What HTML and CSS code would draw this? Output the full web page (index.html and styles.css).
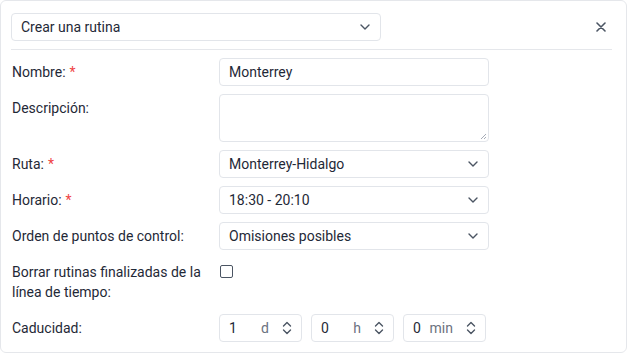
FILE: index.html
```html
<!DOCTYPE html>
<html lang="es">
<head>
    <meta charset="UTF-8">
    <title>Crear una rutina</title>
    <link rel="stylesheet" href="styles.css">
</head>
<body>
    <div class="card">
        <div class="card-header">
            <div class="select select-title">
                <span>Crear una rutina</span>
                <svg class="chevron" viewBox="0 0 10 6" width="10" height="6"><path d="M1 1l4 4 4-4" fill="none" stroke="#4b5563" stroke-width="1.4" stroke-linecap="round" stroke-linejoin="round"/></svg>
            </div>
            <button class="close">
                <svg viewBox="0 0 10 10" width="10" height="10"><path d="M1 1l8 8M9 1l-8 8" stroke="#4b5563" stroke-width="1.6" stroke-linecap="round"/></svg>
            </button>
        </div>

        <div class="form">
            <label class="label">Nombre: <span class="req">*</span></label>
            <div class="input">Monterrey</div>

            <label class="label label-top">Descripción:</label>
            <div class="textarea">
                <svg class="grip" viewBox="0 0 8 8" width="8" height="8"><path d="M7 2L2 7M7 5L5 7" stroke="#9ca3af" stroke-width="0.9"/></svg>
            </div>

            <label class="label">Ruta: <span class="req">*</span></label>
            <div class="select">
                <span>Monterrey-Hidalgo</span>
                <svg class="chevron" viewBox="0 0 10 6" width="10" height="6"><path d="M1 1l4 4 4-4" fill="none" stroke="#4b5563" stroke-width="1.4" stroke-linecap="round" stroke-linejoin="round"/></svg>
            </div>

            <label class="label">Horario: <span class="req">*</span></label>
            <div class="select">
                <span>18:30 - 20:10</span>
                <svg class="chevron" viewBox="0 0 10 6" width="10" height="6"><path d="M1 1l4 4 4-4" fill="none" stroke="#4b5563" stroke-width="1.4" stroke-linecap="round" stroke-linejoin="round"/></svg>
            </div>

            <label class="label">Orden de puntos de control:</label>
            <div class="select">
                <span>Omisiones posibles</span>
                <svg class="chevron" viewBox="0 0 10 6" width="10" height="6"><path d="M1 1l4 4 4-4" fill="none" stroke="#4b5563" stroke-width="1.4" stroke-linecap="round" stroke-linejoin="round"/></svg>
            </div>

            <label class="label label-multi">Borrar rutinas finalizadas de la línea de tiempo:</label>
            <div class="check-cell"><span class="checkbox"></span></div>

            <label class="label">Caducidad:</label>
            <div class="duration">
                <div class="number">
                    <span class="num">1</span>
                    <span class="unit">d</span>
                    <svg class="spin" viewBox="0 0 10 14" width="10" height="14"><path d="M1.5 5l3.5-3.5 3.5 3.5M1.5 9l3.5 3.5 3.5-3.5" fill="none" stroke="#4b5563" stroke-width="1.4" stroke-linecap="round" stroke-linejoin="round"/></svg>
                </div>
                <div class="number">
                    <span class="num">0</span>
                    <span class="unit">h</span>
                    <svg class="spin" viewBox="0 0 10 14" width="10" height="14"><path d="M1.5 5l3.5-3.5 3.5 3.5M1.5 9l3.5 3.5 3.5-3.5" fill="none" stroke="#4b5563" stroke-width="1.4" stroke-linecap="round" stroke-linejoin="round"/></svg>
                </div>
                <div class="number">
                    <span class="num">0</span>
                    <span class="unit">min</span>
                    <svg class="spin" viewBox="0 0 10 14" width="10" height="14"><path d="M1.5 5l3.5-3.5 3.5 3.5M1.5 9l3.5 3.5 3.5-3.5" fill="none" stroke="#4b5563" stroke-width="1.4" stroke-linecap="round" stroke-linejoin="round"/></svg>
                </div>
            </div>
        </div>
    </div>
</body>
</html>
```

FILE: styles.css
```css
* {
    margin: 0;
    padding: 0;
    box-sizing: border-box;
}

body {
    font-family: Roboto, "Noto Sans", sans-serif;
    font-size: 14px;
    color: #1f2937;
    background: #fff;
}

.card {
    width: 627px;
    height: 353px;
    border: 1px solid #e5e7eb;
    border-radius: 6px;
    padding: 12px 14px 0 10px;
}

.card-header {
    display: flex;
    align-items: center;
    justify-content: space-between;
    height: 37px;
    padding-bottom: 8px;
    border-bottom: 1px solid #e5e7eb;
    margin-bottom: 8px;
}

.select,
.input,
.textarea,
.number {
    border: 1px solid #e2e5ea;
    border-radius: 4px;
    background: #fff;
}

.select {
    height: 28px;
    display: flex;
    align-items: center;
    justify-content: space-between;
    padding: 0 10px 0 9px;
}

.select-title {
    width: 370px;
}

.chevron {
    display: block;
}

.close {
    border: none;
    background: none;
    width: 20px;
    height: 20px;
    display: flex;
    align-items: center;
    justify-content: center;
    margin-right: 1px;
}

.form {
    display: grid;
    grid-template-columns: 207px 270px;
    row-gap: 8px;
    padding-left: 1px;
}

.label {
    display: flex;
    align-items: center;
    gap: 4px;
    color: #1f2937;
}

.label-top {
    align-items: flex-start;
    padding-top: 6px;
}

.label-multi {
    display: block;
    line-height: 20px;
    padding: 4px 0;
}

.req {
    color: #ef4444;
}

.input {
    height: 28px;
    display: flex;
    align-items: center;
    padding: 0 9px;
}

.textarea {
    height: 48px;
    position: relative;
}

.grip {
    position: absolute;
    right: 1px;
    bottom: 1px;
}

.check-cell {
    padding-top: 7px;
    padding-left: 1px;
}

.checkbox {
    display: block;
    width: 13px;
    height: 13px;
    border: 1px solid #4b5563;
    border-radius: 2px;
}

.duration {
    display: flex;
    gap: 9px;
}

.number {
    width: 83px;
    height: 28px;
    display: flex;
    align-items: center;
    padding: 0 9px 0 9px;
}

.num {
    flex: 1;
}

.unit {
    color: #6b7280;
    margin-right: 13px;
}

.spin {
    display: block;
}
```
